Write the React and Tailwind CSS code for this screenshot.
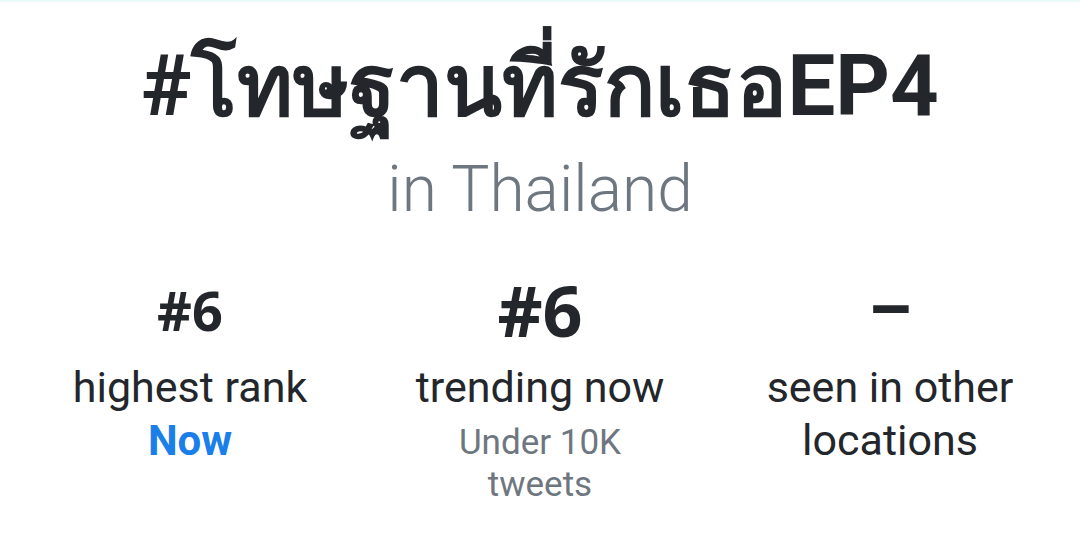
export default function App() {
  const stats = [
    { value: "#6", size: "text-[54px]", label: "highest rank", extra: "Now" },
    { value: "#6", size: "text-[70px]", label: "trending now", sub: "Under 10K tweets" },
    { value: "–", size: "text-[70px]", label: "seen in other locations", dash: true },
  ];

  return (
    <div className="w-[1080px] h-[538px] bg-white border-t-2 border-[#e6faf7] font-['Roboto',sans-serif] text-[#23262b] overflow-hidden">
      <div className="flex flex-col items-center pt-[36px]">
        <h1 className="text-[85px] font-bold leading-[96px] font-['Roboto','Noto_Sans',sans-serif]">
          #โทษฐานที่รักเธอEP4
        </h1>
        <p className="text-[64px] font-light leading-[72px] text-[#6e7780] mt-[20px]">in Thailand</p>
      </div>
      <div className="grid grid-cols-3 px-[15px] mt-[44px]">
        {stats.map((s, i) => (
          <div key={i} className="flex flex-col items-center text-center">
            <div
              className={`${s.size} font-bold leading-[80px] h-[80px] ${
                s.dash ? "font-['Roboto',sans-serif]" : "font-['Open_Sans',sans-serif]"
              }`}
            >
              {s.value}
            </div>
            <p className="text-[43px] leading-[53px] max-w-[280px] mt-[11px]">{s.label}</p>
            {s.extra && (
              <p className="text-[42px] leading-[53px] font-bold text-[#1a7fe8]">{s.extra}</p>
            )}
            {s.sub && (
              <p className="text-[35px] leading-[42px] text-[#6e7780] max-w-[190px] mt-[8px]">{s.sub}</p>
            )}
          </div>
        ))}
      </div>
    </div>
  );
}
